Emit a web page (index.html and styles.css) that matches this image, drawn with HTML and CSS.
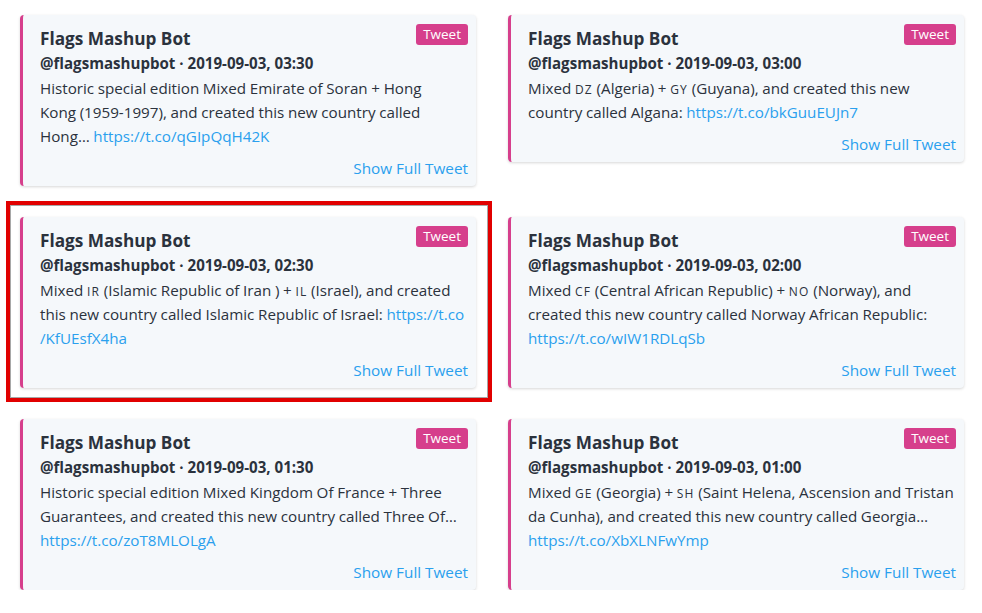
FILE: index.html
```html
<!DOCTYPE html>
<html lang="en">
<head>
<meta charset="utf-8">
<title>Flags Mashup Bot tweets</title>
<link rel="stylesheet" href="styles.css">
</head>
<body>
<main class="feed">
  <article class="card">
    <span class="badge">Tweet</span>
    <h2 class="name">Flags Mashup Bot</h2>
    <div class="meta">@flagsmashupbot · 2019-09-03, 03:30</div>
    <p class="text">Historic special edition Mixed Emirate of Soran + Hong<br>Kong (1959-1997), and created this new country called Hong… <a href="#">https://t.co/qGIpQqH42K</a></p>
    <a class="more" href="#">Show Full Tweet</a>
  </article>
  <article class="card">
    <span class="badge">Tweet</span>
    <h2 class="name">Flags Mashup Bot</h2>
    <div class="meta">@flagsmashupbot · 2019-09-03, 03:00</div>
    <p class="text">Mixed <span class="cc">dz</span> (Algeria) + <span class="cc">gy</span> (Guyana), and created this new country called Algana: <a href="#">https://t.co/bkGuuEUJn7</a></p>
    <a class="more" href="#">Show Full Tweet</a>
  </article>
  <article class="card highlighted">
    <span class="badge">Tweet</span>
    <h2 class="name">Flags Mashup Bot</h2>
    <div class="meta">@flagsmashupbot · 2019-09-03, 02:30</div>
    <p class="text">Mixed <span class="cc">ir</span> (Islamic Republic of Iran ) + <span class="cc">il</span> (Israel), and created this new country called Islamic Republic of Israel: <a href="#">https://t.co<wbr>/KfUEsfX4ha</a></p>
    <a class="more" href="#">Show Full Tweet</a>
  </article>
  <article class="card">
    <span class="badge">Tweet</span>
    <h2 class="name">Flags Mashup Bot</h2>
    <div class="meta">@flagsmashupbot · 2019-09-03, 02:00</div>
    <p class="text">Mixed <span class="cc">cf</span> (Central African Republic) + <span class="cc">no</span> (Norway), and created this new country called Norway African Republic: <a href="#">https://t.co/wIW1RDLqSb</a></p>
    <a class="more" href="#">Show Full Tweet</a>
  </article>
  <article class="card">
    <span class="badge">Tweet</span>
    <h2 class="name">Flags Mashup Bot</h2>
    <div class="meta">@flagsmashupbot · 2019-09-03, 01:30</div>
    <p class="text">Historic special edition Mixed Kingdom Of France + Three Guarantees, and created this new country called Three Of… <a href="#">https://t.co/zoT8MLOLgA</a></p>
    <a class="more" href="#">Show Full Tweet</a>
  </article>
  <article class="card">
    <span class="badge">Tweet</span>
    <h2 class="name">Flags Mashup Bot</h2>
    <div class="meta">@flagsmashupbot · 2019-09-03, 01:00</div>
    <p class="text">Mixed <span class="cc">ge</span> (Georgia) + <span class="cc">sh</span> (Saint Helena, Ascension and Tristan da Cunha), and created this new country called Georgia… <a href="#">https://t.co/XbXLNFwYmp</a></p>
    <a class="more" href="#">Show Full Tweet</a>
  </article>
</main>
</body>
</html>
```
FILE: styles.css
```css
* { box-sizing: border-box; }

html, body {
  margin: 0;
  padding: 0;
  background: #ffffff;
}

body {
  font-family: "Open Sans", "Noto Sans", "Liberation Sans", sans-serif;
  color: #2b323d;
}

.feed {
  display: grid;
  grid-template-columns: 456px 456px;
  column-gap: 32px;
  row-gap: 31px;
  align-items: start;
  padding: 15px 0 0 20px;
}

.card {
  position: relative;
  display: flex;
  flex-direction: column;
  background: #f5f8fb;
  border-left: 3px solid #d63f8c;
  border-radius: 4px;
  box-shadow: 0 1px 3px rgba(0, 0, 0, 0.16);
  padding: 12px 8px 6px 17px;
}

.highlighted::after {
  content: "";
  position: absolute;
  top: -16px;
  left: -17px;
  right: -16px;
  bottom: -14px;
  border: 4px solid #e10000;
  box-shadow: inset 0 0 0 1px rgba(60, 60, 60, 0.45);
  pointer-events: none;
}

.badge {
  position: absolute;
  top: 9px;
  right: 8px;
  background: #d63f8c;
  color: #ffffff;
  font-size: 13.5px;
  line-height: 21px;
  padding: 0 7px;
  border-radius: 3px;
}

.name {
  margin: 0;
  font-size: 17.2px;
  line-height: 24px;
  font-weight: 700;
}

.meta {
  font-size: 15.1px;
  line-height: 24px;
  font-weight: 700;
}

.text {
  margin: 1px 0 0;
  font-size: 15.2px;
  line-height: 24px;
  word-spacing: -0.3px;
}

.cc {
  font-variant: small-caps;
  font-size: 16.5px;
  letter-spacing: 1.2px;
}

a {
  color: #2aa0ee;
  text-decoration: none;
}

.more {
  align-self: flex-end;
  margin-top: 8px;
  font-size: 15.3px;
  line-height: 24px;
}
```
